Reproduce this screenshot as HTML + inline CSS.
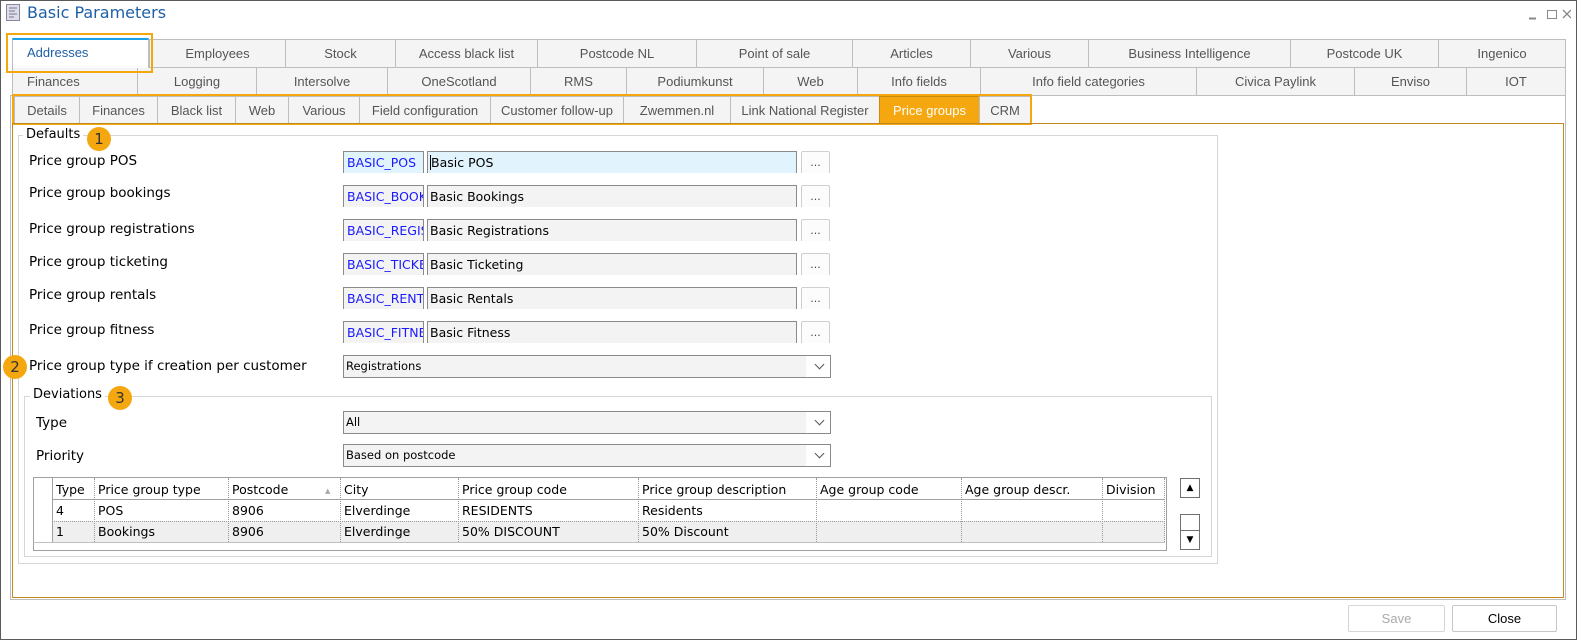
<!DOCTYPE html>
<html><head><meta charset="utf-8"><style>
*{box-sizing:border-box;margin:0;padding:0}
body{width:1577px;height:640px;background:#fff;position:relative;overflow:hidden;font-family:"DejaVu Sans",sans-serif;font-size:13px;color:#000}
.a{position:absolute}
.win{left:0;top:0;width:1577px;height:640px;border:1px solid #5a5a5a}
.title{left:27px;top:3px;font-family:"DejaVu Sans",sans-serif;font-size:16px;color:#1e5fa8}
.t{position:absolute;height:28px;background:#f4f4f4;border:1px solid #bdbdbd;border-bottom:none;font-family:"Liberation Sans",sans-serif;font-size:13px;color:#555;text-align:center;line-height:27px;white-space:nowrap;overflow:hidden}
.lbl{position:absolute;left:29px;font-size:13.5px}
.code{position:absolute;left:343px;width:81px;height:22px;border:1px solid #8a8a8a;border-bottom:none;background:#f3f3f3;color:#1a1aff;font-size:12.5px;padding:3px 0 0 3px;overflow:hidden;white-space:nowrap}
.desc{position:absolute;left:427px;width:370px;height:22px;border:1px solid #8a8a8a;border-bottom:none;background:#f3f3f3;font-size:12.5px;padding:3px 0 0 2px}
.btn{position:absolute;left:801px;width:29px;height:22px;border:1px solid #cfcfcf;border-bottom:none;border-radius:2px 2px 0 0;background:#fcfcfc;font-size:11px;text-align:center;line-height:22px;color:#444}
.combo{position:absolute;left:343px;width:488px;height:23px;border:1px solid #8a8a8a;background:#f3f3f3;font-size:11.5px;padding:3px 0 0 2px}
.combo:after{content:"";position:absolute;right:0;top:0;width:24px;height:21px;background:#fff}
.combo i{position:absolute;right:7px;top:5px;width:7px;height:7px;border-right:1px solid #555;border-bottom:1px solid #555;transform:rotate(45deg);z-index:2}
.badge{position:absolute;width:24px;height:24px;border-radius:50%;background:#f5a70f;color:#333;font-size:15px;text-align:center;line-height:24px}
.grid{position:absolute;left:33px;top:477px;width:1134px;height:74px;border:1px solid #a0a0a0}
.c{position:absolute;font-size:12.5px;white-space:nowrap;padding-left:4px;line-height:22px}
.vl{position:absolute;width:0;border-left:1px dotted #999}
</style></head><body>
<div class="a win"></div>
<svg class="a" style="left:6px;top:4px" width="14" height="17"><rect x="0.5" y="0.5" width="13" height="16" fill="#dde" stroke="#889"/><path d="M3 4h8M3 7h6M3 10h8M3 13h5" stroke="#778"/></svg>
<div class="a title">Basic Parameters</div>
<svg class="a" style="left:1527px;top:8px" width="44" height="12"><path d="M2 10.5h7" stroke="#888" stroke-width="2"/><rect x="20.5" y="2.5" width="9" height="8" fill="none" stroke="#888"/><path d="M36 2l8 8M44 2l-8 8" stroke="#888" stroke-width="1.3"/></svg>

<!-- row1 -->
<div class="t" style="left:149px;top:39px;width:137px">Employees</div>
<div class="t" style="left:285px;top:39px;width:111px">Stock</div>
<div class="t" style="left:395px;top:39px;width:143px">Access black list</div>
<div class="t" style="left:537px;top:39px;width:160px">Postcode NL</div>
<div class="t" style="left:696px;top:39px;width:157px">Point of sale</div>
<div class="t" style="left:852px;top:39px;width:119px">Articles</div>
<div class="t" style="left:970px;top:39px;width:119px">Various</div>
<div class="t" style="left:1088px;top:39px;width:203px">Business Intelligence</div>
<div class="t" style="left:1290px;top:39px;width:149px">Postcode UK</div>
<div class="t" style="left:1438px;top:39px;width:128px">Ingenico</div>
<!-- row2 -->
<div class="t" style="left:12px;top:67px;width:126px;text-align:left;padding-left:14px">Finances</div>
<div class="t" style="left:137px;top:67px;width:120px">Logging</div>
<div class="t" style="left:256px;top:67px;width:132px">Intersolve</div>
<div class="t" style="left:387px;top:67px;width:144px">OneScotland</div>
<div class="t" style="left:530px;top:67px;width:97px">RMS</div>
<div class="t" style="left:626px;top:67px;width:138px">Podiumkunst</div>
<div class="t" style="left:763px;top:67px;width:95px">Web</div>
<div class="t" style="left:857px;top:67px;width:124px">Info fields</div>
<div class="t" style="left:980px;top:67px;width:217px">Info field categories</div>
<div class="t" style="left:1196px;top:67px;width:159px">Civica Paylink</div>
<div class="t" style="left:1354px;top:67px;width:113px">Enviso</div>
<div class="t" style="left:1466px;top:67px;width:100px">IOT</div>
<!-- selected Addresses -->
<div class="t" style="left:12px;top:38px;width:137px;height:30px;background:#fff;border-top:2px solid #1aa3e8;color:#1e5fa8;text-align:left;padding-left:14px;line-height:26px">Addresses</div>
<div class="a" style="left:6px;top:33px;width:147px;height:40px;border:2px solid #f5a70f"></div>

<!-- outer panel -->
<div class="a" style="left:10px;top:95px;width:1556px;height:505px;border:1px solid #bdbdbd;background:#fff"></div>
<!-- row3 -->
<div class="t" style="left:14px;top:96px;width:66px;height:27px">Details</div>
<div class="t" style="left:79px;top:96px;width:79px;height:27px">Finances</div>
<div class="t" style="left:157px;top:96px;width:79px;height:27px">Black list</div>
<div class="t" style="left:235px;top:96px;width:54px;height:27px">Web</div>
<div class="t" style="left:288px;top:96px;width:72px;height:27px">Various</div>
<div class="t" style="left:359px;top:96px;width:132px;height:27px">Field configuration</div>
<div class="t" style="left:490px;top:96px;width:134px;height:27px">Customer follow-up</div>
<div class="t" style="left:623px;top:96px;width:108px;height:27px">Zwemmen.nl</div>
<div class="t" style="left:730px;top:96px;width:150px;height:27px">Link National Register</div>
<div class="t" style="left:879px;top:96px;width:101px;height:27px;background:#f5a70f;color:#fff;border-color:#c98a10">Price groups</div>
<div class="t" style="left:979px;top:96px;width:52px;height:27px">CRM</div>
<div class="a" style="left:12px;top:94px;width:1020px;height:31px;border:2px solid #f5a70f"></div>
<!-- content panel -->
<div class="a" style="left:12px;top:123px;width:1552px;height:475px;border:1px solid #c08a20"></div>

<!-- Defaults group -->
<div class="a" style="left:18px;top:135px;width:1200px;height:429px;border:1px solid #d6d6d6"></div>
<div class="a" style="left:23px;top:127px;background:#fff;padding:0 3px;font-size:13px">Defaults</div>
<div class="badge" style="left:87px;top:127px">1</div>

<div class="lbl" style="top:153px">Price group POS</div>
<div class="code" style="top:151px;background:#e1f3fc">BASIC_POS</div><div class="desc" style="top:151px;background:#e1f3fc"><span style="border-left:1px solid #000"></span>Basic POS</div><div class="btn" style="top:151px">...</div>
<div class="lbl" style="top:185px">Price group bookings</div>
<div class="code" style="top:185px">BASIC_BOOKINGS</div><div class="desc" style="top:185px">Basic Bookings</div><div class="btn" style="top:185px">...</div>
<div class="lbl" style="top:221px">Price group registrations</div>
<div class="code" style="top:219px">BASIC_REGIS</div><div class="desc" style="top:219px">Basic Registrations</div><div class="btn" style="top:219px">...</div>
<div class="lbl" style="top:254px">Price group ticketing</div>
<div class="code" style="top:253px">BASIC_TICKET</div><div class="desc" style="top:253px">Basic Ticketing</div><div class="btn" style="top:253px">...</div>
<div class="lbl" style="top:287px">Price group rentals</div>
<div class="code" style="top:287px">BASIC_RENTAL</div><div class="desc" style="top:287px">Basic Rentals</div><div class="btn" style="top:287px">...</div>
<div class="lbl" style="top:322px">Price group fitness</div>
<div class="code" style="top:321px">BASIC_FITNESS</div><div class="desc" style="top:321px">Basic Fitness</div><div class="btn" style="top:321px">...</div>

<div class="badge" style="left:3px;top:355px">2</div>
<div class="lbl" style="top:358px">Price group type if creation per customer</div>
<div class="combo" style="top:355px">Registrations<i></i></div>

<!-- Deviations -->
<div class="a" style="left:24px;top:396px;width:1188px;height:161px;border:1px solid #d6d6d6"></div>
<div class="a" style="left:30px;top:387px;background:#fff;padding:0 3px;font-size:13px">Deviations</div>
<div class="badge" style="left:108px;top:386px">3</div>
<div class="lbl" style="left:36px;top:415px">Type</div>
<div class="combo" style="top:411px">All<i></i></div>
<div class="lbl" style="left:36px;top:448px">Priority</div>
<div class="combo" style="top:444px">Based on postcode<i></i></div>

<div class="grid"></div>
<div class="a" style="left:52px;top:478px;width:1113px;height:22px;border-bottom:1px solid #a0a0a0"></div>
<div class="a" style="left:52px;top:521px;width:1113px;height:22px;background:#efefef;border-top:1px dotted #999;border-bottom:1px dotted #999"></div>
<div class="a" style="left:52px;top:478px;width:0;height:64px;border-left:1px solid #a0a0a0"></div>
<div class="a" style="left:1164px;top:478px;width:0;height:64px;border-left:1px dotted #999"></div>
<div class="vl" style="left:94px;top:478px;height:64px"></div>
<div class="vl" style="left:228px;top:478px;height:64px"></div>
<div class="vl" style="left:340px;top:478px;height:64px"></div>
<div class="vl" style="left:458px;top:478px;height:64px"></div>
<div class="vl" style="left:638px;top:478px;height:64px"></div>
<div class="vl" style="left:816px;top:478px;height:64px"></div>
<div class="vl" style="left:961px;top:478px;height:64px"></div>
<div class="vl" style="left:1102px;top:478px;height:64px"></div>
<div class="a" style="left:33px;top:542px;width:1132px;border-top:1px solid #c0c0c0"></div>
<div class="c" style="left:52px;top:479px">Type</div><div class="c" style="left:94px;top:479px">Price group type</div><div class="c" style="left:228px;top:479px">Postcode</div><div class="a" style="left:325px;top:487px;font-size:7px;color:#aaa">▲</div><div class="c" style="left:340px;top:479px">City</div><div class="c" style="left:458px;top:479px">Price group code</div><div class="c" style="left:638px;top:479px">Price group description</div><div class="c" style="left:816px;top:479px">Age group code</div><div class="c" style="left:961px;top:479px">Age group descr.</div><div class="c" style="left:1102px;top:479px">Division</div>
<div class="c" style="left:52px;top:500px">4</div><div class="c" style="left:94px;top:500px">POS</div><div class="c" style="left:228px;top:500px">8906</div><div class="c" style="left:340px;top:500px">Elverdinge</div><div class="c" style="left:458px;top:500px">RESIDENTS</div><div class="c" style="left:638px;top:500px">Residents</div>
<div class="c" style="left:52px;top:521px">1</div><div class="c" style="left:94px;top:521px">Bookings</div><div class="c" style="left:228px;top:521px">8906</div><div class="c" style="left:340px;top:521px">Elverdinge</div><div class="c" style="left:458px;top:521px">50% DISCOUNT</div><div class="c" style="left:638px;top:521px">50% Discount</div>
<div class="a" style="left:1180px;top:478px;width:20px;height:20px;border:1px solid #707070;background:#fff;font-size:9px;text-align:center;line-height:18px">▲</div>
<div class="a" style="left:1180px;top:514px;width:20px;height:17px;border:1px solid #707070;background:#fff"></div>
<div class="a" style="left:1180px;top:530px;width:20px;height:20px;border:1px solid #707070;background:#fff;font-size:9px;text-align:center;line-height:18px">▼</div>

<!-- buttons -->
<div class="a" style="left:1348px;top:605px;width:97px;height:27px;border:1px solid #d6d6d6;border-radius:2px;text-align:center;line-height:25px;color:#aaa;font-family:'Liberation Sans',sans-serif">Save</div>
<div class="a" style="left:1452px;top:605px;width:105px;height:27px;border:1px solid #c6c6c6;border-radius:2px;text-align:center;line-height:25px;font-family:'Liberation Sans',sans-serif">Close</div>
</body></html>
